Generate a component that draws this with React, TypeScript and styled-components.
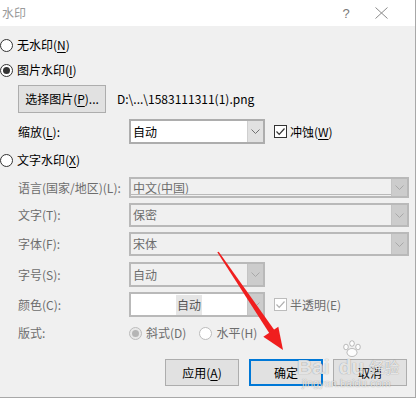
import React from "react";
import styled, { createGlobalStyle } from "styled-components";

const Global = createGlobalStyle`
  html, body { margin: 0; padding: 0; background: #ffffff; }
  body {
    font-family: "Noto Sans CJK SC", "Noto Sans", sans-serif;
    font-size: 12px;
    color: #000;
  }
  * { box-sizing: border-box; }
`;

const Dialog = styled.div`
  position: relative;
  width: 416px;
  height: 398px;
  border-right: 1px solid #a8a8a8;
  border-bottom: 1px solid #a8a8a8;
  background: #f0f0f0;
  display: flex;
  flex-direction: column;
  overflow: hidden;
`;

const TitleBar = styled.div`
  height: 26px;
  flex: none;
  background: #ffffff;
  display: flex;
  align-items: center;
  padding-left: 2px;
  padding-right: 14px;
  color: #9a9a9a;
  font-size: 12px;
`;

const Title = styled.span`
  flex: 1;
  line-height: 26px;
`;

const TitleButton = styled.div<{ $w: number }>`
  width: ${(p) => p.$w}px;
  height: 26px;
  display: flex;
  align-items: center;
  justify-content: center;
  color: #7a7a7a;
  font-family: "Liberation Sans", sans-serif;
  font-size: 13px;
`;

const Row = styled.div<{ $mt: number; $h: number; $indent?: boolean }>`
  margin-top: ${(p) => p.$mt}px;
  height: ${(p) => p.$h}px;
  display: flex;
  align-items: center;
  padding-left: ${(p) => (p.$indent ? 18 : 0)}px;
  flex: none;
`;

const ButtonRow = styled.div`
  margin-top: 17px;
  height: 27px;
  display: flex;
  justify-content: flex-end;
  gap: 10px;
  padding-right: 8px;
  flex: none;
`;

const RadioCircle = styled.span<{ $checked?: boolean; $disabled?: boolean; $ml?: number }>`
  width: 13px;
  height: 13px;
  flex: none;
  margin-left: ${(p) => p.$ml ?? 0}px;
  border-radius: 50%;
  border: 1px solid ${(p) => (p.$disabled ? "#bcbcbc" : "#333333")};
  background: ${(p) => (p.$disabled && p.$checked ? "#e8e8e8" : "#ffffff")};
  display: flex;
  align-items: center;
  justify-content: center;
  &::after {
    content: "";
    display: ${(p) => (p.$checked ? "block" : "none")};
    width: 7px;
    height: 7px;
    border-radius: 50%;
    background: ${(p) => (p.$disabled ? "#b5b5b5" : "#333333")};
  }
`;

const Text = styled.span<{ $disabled?: boolean; $ml?: number }>`
  color: ${(p) => (p.$disabled ? "#6d6d6d" : "#000000")};
  margin-left: ${(p) => p.$ml ?? 0}px;
  line-height: 16px;
  white-space: nowrap;
`;

const U = styled.span`
  text-decoration: underline;
  text-underline-offset: 2px;
`;

const FieldLabel = styled.span<{ $disabled?: boolean }>`
  width: 111px;
  flex: none;
  color: ${(p) => (p.$disabled ? "#6d6d6d" : "#000000")};
  line-height: 16px;
  white-space: nowrap;
`;

const PushButton = styled.div<{ $default?: boolean; $w: number; $h: number }>`
  width: ${(p) => p.$w}px;
  height: ${(p) => p.$h}px;
  flex: none;
  background: #e1e1e1;
  border: ${(p) => (p.$default ? "2px solid #0078d7" : "1px solid #adadad")};
  display: flex;
  align-items: center;
  justify-content: center;
  color: #000;
  line-height: 16px;
  white-space: nowrap;
`;

const PathText = styled.span`
  margin-left: 11px;
  color: #000;
  line-height: 16px;
  white-space: nowrap;
`;

const Select = styled.div<{ $w: number; $disabled?: boolean; $white?: boolean }>`
  position: relative;
  width: ${(p) => p.$w}px;
  height: 100%;
  flex: none;
  border: 2px solid ${(p) => (p.$disabled ? "#b9b9b9" : "#adadad")};
  background: ${(p) => (p.$white ? "#ffffff" : "#f0f0f0")};
  display: flex;
  align-items: stretch;
`;

const SelectValue = styled.div<{ $disabled?: boolean; $center?: boolean }>`
  flex: 1;
  display: flex;
  align-items: center;
  justify-content: ${(p) => (p.$center ? "center" : "flex-start")};
  padding-left: ${(p) => (p.$center ? 0 : 2)}px;
  color: ${(p) => (p.$disabled ? "#6d6d6d" : "#000000")};
  line-height: 16px;
  white-space: nowrap;
`;

const Highlight = styled.span`
  background: #e6e6e6;
  padding: 2px 1px;
  color: #555;
`;

const DoubleLine = styled.div`
  position: absolute;
  left: 0;
  right: 16px;
  bottom: 1px;
  border-top: 1px solid #b9b9b9;
`;

const Chevron = styled.div<{ $disabled?: boolean }>`
  width: 16px;
  flex: none;
  background: ${(p) => (p.$disabled ? "#cccccc" : "#e1e1e1")};
  border-left: 1px solid ${(p) => (p.$disabled ? "#c4c4c4" : "#cfcfcf")};
  display: flex;
  align-items: center;
  justify-content: center;
`;

const CheckBox = styled.span<{ $disabled?: boolean }>`
  width: 13px;
  height: 13px;
  flex: none;
  margin-left: 9px;
  border: 1px solid ${(p) => (p.$disabled ? "#bcbcbc" : "#333333")};
  background: #ffffff;
  display: flex;
  align-items: center;
  justify-content: center;
`;

const Overlay = styled.svg`
  position: absolute;
  left: 0;
  top: 0;
  width: 417px;
  height: 400px;
  pointer-events: none;
`;

const Watermark = styled.div`
  position: absolute;
  left: 297px;
  top: 342px;
  width: 110px;
  display: flex;
  flex-direction: column;
  align-items: flex-start;
  pointer-events: none;
  color: rgba(255, 255, 255, 0.8);
  text-shadow: 0 0 1px rgba(0, 0, 0, 0.45);
`;

const WmLogo = styled.div`
  height: 35px;
  font-family: "Liberation Sans", sans-serif;
  font-weight: bold;
  font-size: 21px;
  line-height: 20px;
  display: flex;
  align-items: flex-end;
`;

const WmDu = styled.div`
  display: flex;
  flex-direction: column;
  align-items: center;
  margin-left: 9px;
`;

const WmCn = styled.span`
  font-family: "Noto Sans CJK SC", sans-serif;
  font-size: 15px;
  line-height: 20px;
  font-weight: normal;
  margin-left: 5px;
`;

const WmUrl = styled.div`
  font-family: "Liberation Sans", sans-serif;
  font-size: 11px;
  line-height: 12px;
  margin-left: 5px;
`;

const ChevronIcon = ({ color }: { color: string }) => (
  <svg width="9" height="5" viewBox="0 0 9 5">
    <polyline points="0.5,0.5 4.5,4.5 8.5,0.5" fill="none" stroke={color} strokeWidth="1" />
  </svg>
);

const CheckIcon = ({ color }: { color: string }) => (
  <svg width="11" height="11" viewBox="0 0 11 11">
    <polyline points="1.5,5.5 4.2,8.3 9.5,2.5" fill="none" stroke={color} strokeWidth="1.2" />
  </svg>
);

type SelProps = {
  w: number;
  value: React.ReactNode;
  disabled?: boolean;
  white?: boolean;
  center?: boolean;
  doubleLine?: boolean;
};

const ComboBox = ({ w, value, disabled, white, center, doubleLine }: SelProps) => (
  <Select $w={w} $disabled={disabled} $white={white}>
    <SelectValue $disabled={disabled} $center={center}>
      {value}
    </SelectValue>
    {doubleLine && <DoubleLine />}
    <Chevron $disabled={disabled}>
      <ChevronIcon color={disabled ? "#a8a8a8" : "#707070"} />
    </Chevron>
  </Select>
);

export default function App() {
  return (
    <>
      <Global />
      <Dialog>
        <TitleBar>
          <Title>水印</Title>
          <TitleButton $w={30}>?</TitleButton>
          <TitleButton $w={40}>
            <svg width="13" height="12" viewBox="0 0 13 12">
              <line x1="0.5" y1="0.5" x2="12.5" y2="11.5" stroke="#8a8a8a" strokeWidth="1" />
              <line x1="12.5" y1="0.5" x2="0.5" y2="11.5" stroke="#8a8a8a" strokeWidth="1" />
            </svg>
          </TitleButton>
        </TitleBar>

        <Row $mt={10} $h={18}>
          <RadioCircle />
          <Text $ml={4}>
            无水印(<U>N</U>)
          </Text>
        </Row>

        <Row $mt={7} $h={18}>
          <RadioCircle $checked />
          <Text $ml={4}>
            图片水印(<U>I</U>)
          </Text>
        </Row>

        <Row $mt={6} $h={28} $indent>
          <PushButton $w={88} $h={28}>
            选择图片(<U>P</U>)...
          </PushButton>
          <PathText>D:\...\1583111311(1).png</PathText>
        </Row>

        <Row $mt={6} $h={25} $indent>
          <FieldLabel>
            缩放(<U>L</U>):
          </FieldLabel>
          <ComboBox w={136} value="自动" white />
          <CheckBox>
            <CheckIcon color="#333333" />
          </CheckBox>
          <Text $ml={3}>
            冲蚀(<U>W</U>)
          </Text>
        </Row>

        <Row $mt={7} $h={18}>
          <RadioCircle />
          <Text $ml={4}>
            文字水印(<U>X</U>)
          </Text>
        </Row>

        <Row $mt={8} $h={21} $indent>
          <FieldLabel $disabled>语言(国家/地区)(L):</FieldLabel>
          <ComboBox w={280} value="中文(中国)" disabled doubleLine />
        </Row>

        <Row $mt={5} $h={24} $indent>
          <FieldLabel $disabled>文字(T):</FieldLabel>
          <ComboBox w={280} value="保密" disabled />
        </Row>

        <Row $mt={5} $h={24} $indent>
          <FieldLabel $disabled>字体(F):</FieldLabel>
          <ComboBox w={280} value="宋体" disabled />
        </Row>

        <Row $mt={6} $h={25} $indent>
          <FieldLabel $disabled>字号(S):</FieldLabel>
          <ComboBox w={136} value="自动" disabled />
        </Row>

        <Row $mt={5} $h={25} $indent>
          <FieldLabel $disabled>颜色(C):</FieldLabel>
          <ComboBox w={136} value={<Highlight>自动</Highlight>} disabled white center />
          <CheckBox $disabled>
            <CheckIcon color="#b0b0b0" />
          </CheckBox>
          <Text $ml={3} $disabled>
            半透明(E)
          </Text>
        </Row>

        <Row $mt={7} $h={18} $indent>
          <FieldLabel $disabled>版式:</FieldLabel>
          <RadioCircle $checked $disabled />
          <Text $ml={4} $disabled>
            斜式(D)
          </Text>
          <RadioCircle $disabled $ml={13} />
          <Text $ml={4} $disabled>
            水平(H)
          </Text>
        </Row>

        <ButtonRow>
          <PushButton $w={74} $h={27}>
            应用(<U>A</U>)
          </PushButton>
          <PushButton $w={74} $h={27} $default>
            确定
          </PushButton>
          <PushButton $w={74} $h={27}>
            取消
          </PushButton>
        </ButtonRow>

        <Watermark>
          <WmLogo>
            Bai
            <WmDu>
              <svg width="20" height="17" viewBox="0 0 20 17">
                <g fill="rgba(255,255,255,0.85)" stroke="rgba(0,0,0,0.3)" strokeWidth="0.8">
                  <ellipse cx="4" cy="7" rx="2.3" ry="2.8" />
                  <ellipse cx="10" cy="3.5" rx="2.3" ry="2.8" />
                  <ellipse cx="16" cy="7" rx="2.3" ry="2.8" />
                  <ellipse cx="10" cy="12.5" rx="5" ry="4" />
                </g>
              </svg>
              <span>du</span>
            </WmDu>
            <WmCn>经验</WmCn>
          </WmLogo>
          <WmUrl>jingyan.baidu.com</WmUrl>
        </Watermark>

        <Overlay viewBox="0 0 417 400">
          <polygon points="217.3,252.3 218.7,251.7 274.5,330.2 269.5,333.6" fill="#f01e1e" />
          <polygon points="283,350 263.3,336.7 278.3,326.7" fill="#f01e1e" />
        </Overlay>
      </Dialog>
    </>
  );
}
